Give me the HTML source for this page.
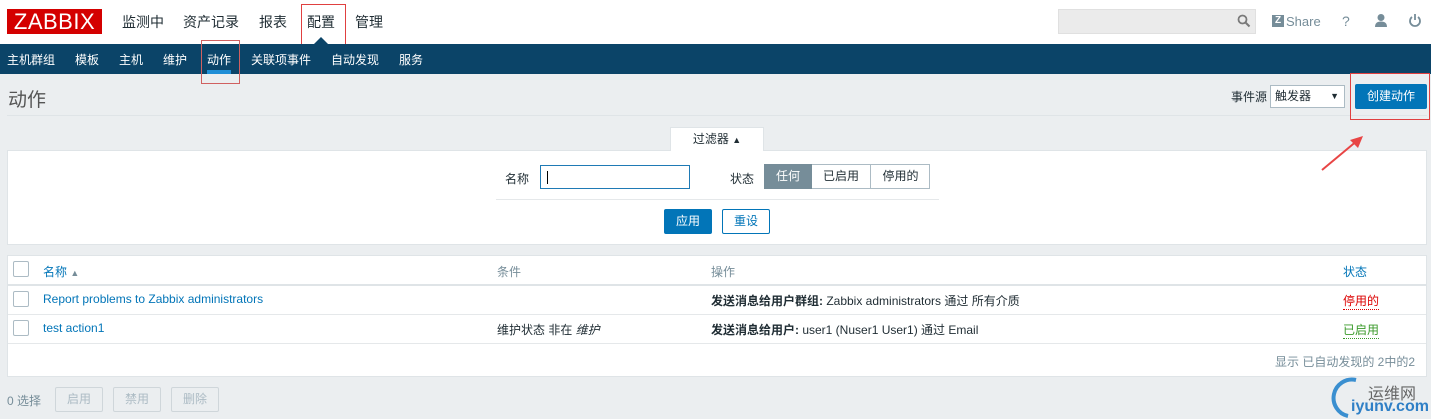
<!DOCTYPE html>
<html><head><meta charset="utf-8"><style>
*{box-sizing:border-box;margin:0;padding:0}
body{width:1431px;height:419px;background:#ebeef0;font-family:"Liberation Sans","Noto Sans CJK SC",sans-serif;font-size:12px;color:#1f2c33;position:relative;overflow:hidden}
.a{position:absolute;white-space:nowrap}
.top{position:absolute;left:0;top:0;width:1431px;height:44px;background:#fff}
.nav{position:absolute;left:0;top:44px;width:1431px;height:30px;background:#0b4468}
.nav span{position:absolute;top:7px;color:#fff;font-size:12px}
.btn{position:absolute;height:25px;line-height:23px;text-align:center;border:1px solid #0275b8;border-radius:2px;font-size:12px}
.cb{position:absolute;left:13px;width:16px;height:16px;border:1px solid #acbbc4;border-radius:2px;background:#fff}
</style></head><body>
<div class="top"></div>
<div class="a" style="left:7px;top:9px;width:95px;height:25px;background:#d40000;color:#fff;font-size:22px;line-height:25px;text-align:center;letter-spacing:0.5px">ZABBIX</div>
<div class="a" style="left:122px;top:12px;font-size:14px;color:#1f2c33">监测中</div>
<div class="a" style="left:183px;top:12px;font-size:14px">资产记录</div>
<div class="a" style="left:259px;top:12px;font-size:14px">报表</div>
<div class="a" style="left:307px;top:12px;font-size:14px">配置</div>
<div class="a" style="left:355px;top:12px;font-size:14px">管理</div>
<div class="a" style="left:301px;top:4px;width:45px;height:42px;border:1px solid #e04040"></div>
<div class="a" style="left:314px;top:37px;width:0;height:0;border-left:7px solid transparent;border-right:7px solid transparent;border-bottom:7px solid #0b4468"></div>
<div class="a" style="left:1058px;top:9px;width:198px;height:25px;background:#ebebeb;border:1px solid #e0e0e0"></div>
<svg class="a" style="left:1237px;top:14px" width="14" height="14" viewBox="0 0 14 14"><circle cx="5.5" cy="5.5" r="4" fill="none" stroke="#7a7a7a" stroke-width="1.8"/><line x1="8.5" y1="8.5" x2="12.5" y2="12.5" stroke="#7a7a7a" stroke-width="2"/></svg>
<div class="a" style="left:1272px;top:15px;width:12px;height:12px;background:#768d99;color:#fff;font-size:10px;font-weight:bold;line-height:12px;text-align:center">Z</div>
<div class="a" style="left:1286px;top:14px;font-size:13px;color:#768d99">Share</div>
<div class="a" style="left:1342px;top:13px;font-size:14px;color:#768d99">?</div>
<svg class="a" style="left:1374px;top:13px" width="14" height="15" viewBox="0 0 14 15"><circle cx="7" cy="4.5" r="3.5" fill="#768d99"/><path d="M1 14 Q1 8.5 7 8.5 Q13 8.5 13 14Z" fill="#768d99"/></svg>
<svg class="a" style="left:1408px;top:13px" width="14" height="15" viewBox="0 0 14 15"><path d="M4 4 A5 5 0 1 0 10 4" fill="none" stroke="#768d99" stroke-width="1.8"/><line x1="7" y1="1" x2="7" y2="7" stroke="#768d99" stroke-width="1.8"/></svg>
<div class="nav">
<span style="left:7px">主机群组</span><span style="left:75px">模板</span><span style="left:119px">主机</span><span style="left:163px">维护</span><span style="left:207px">动作</span><span style="left:251px">关联项事件</span><span style="left:331px">自动发现</span><span style="left:399px">服务</span>
<div class="a" style="left:207px;top:26px;width:24px;height:4px;background:#1f8ed6"></div>
</div>
<div class="a" style="left:201px;top:40px;width:39px;height:44px;border:1px solid #d06060"></div>
<div class="a" style="left:8px;top:85px;font-size:19px;color:#555">动作</div>
<div class="a" style="left:7px;top:115px;width:1420px;height:1px;background:#dfe4e7"></div>
<div class="a" style="left:1231px;top:88px;font-size:12px">事件源</div>
<div class="a" style="left:1270px;top:85px;width:75px;height:23px;background:#fff;border:1px solid #acbbc4;padding-left:4px;line-height:21px">触发器<span style="position:absolute;right:5px;font-size:9px">▼</span></div>
<div class="btn" style="left:1355px;top:84px;width:72px;background:#0275b8;color:#fff">创建动作</div>
<div class="a" style="left:1350px;top:73px;width:80px;height:47px;border:1px solid #e04040"></div>
<div class="a" style="left:670px;top:127px;width:94px;height:24px;background:#fff;border:1px solid #dfe4e7;border-bottom:none;text-align:center;line-height:22px">过滤器 <span style="font-size:9px">▲</span></div>
<div class="a" style="left:7px;top:150px;width:1420px;height:95px;background:#fff;border:1px solid #dfe4e7"></div>
<div class="a" style="left:671px;top:149px;width:92px;height:3px;background:#fff"></div>
<svg class="a" style="left:1318px;top:132px" width="50" height="42"><line x1="4" y1="38" x2="40" y2="8" stroke="#e84545" stroke-width="2"/><path d="M45 4 L32 8 L40 16Z" fill="#e84545"/></svg>
<div class="a" style="left:505px;top:170px">名称</div>
<div class="a" style="left:540px;top:165px;width:150px;height:24px;border:1px solid #1f7ab5;background:#fff"><div style="position:absolute;left:6px;top:5px;width:1px;height:13px;background:#000"></div></div>
<div class="a" style="left:730px;top:170px">状态</div>
<div class="a" style="left:764px;top:164px;width:166px;height:25px;border:1px solid #acbbc4;background:#fff"></div>
<div class="a" style="left:764px;top:164px;width:48px;height:25px;background:#768d99;color:#fff;text-align:center;line-height:25px">任何</div>
<div class="a" style="left:812px;top:165px;width:59px;height:23px;border-right:1px solid #acbbc4;text-align:center;line-height:23px">已启用</div>
<div class="a" style="left:871px;top:165px;width:59px;text-align:center;line-height:23px">停用的</div>
<div class="a" style="left:496px;top:199px;width:443px;height:1px;background:#e5e8ea"></div>
<div class="btn" style="left:664px;top:209px;width:48px;background:#0275b8;color:#fff">应用</div>
<div class="btn" style="left:722px;top:209px;width:48px;background:#fff;color:#0275b8">重设</div>
<div class="a" style="left:7px;top:255px;width:1420px;height:122px;background:#fff;border:1px solid #dfe4e7"></div>
<div class="a" style="left:8px;top:284px;width:1418px;height:2px;background:#dfe4e7"></div>
<div class="a" style="left:8px;top:314px;width:1418px;height:1px;background:#e5e8ea"></div>
<div class="a" style="left:8px;top:343px;width:1418px;height:1px;background:#e5e8ea"></div>
<div class="cb" style="top:261px"></div><div class="cb" style="top:291px"></div><div class="cb" style="top:320px"></div>
<div class="a" style="left:43px;top:263px;color:#0275b8">名称 <span style="font-size:9px;color:#768d99">▲</span></div>
<div class="a" style="left:497px;top:263px;color:#768d99">条件</div>
<div class="a" style="left:711px;top:263px;color:#768d99">操作</div>
<div class="a" style="left:1343px;top:263px;color:#0275b8">状态</div>
<div class="a" style="left:43px;top:292px;color:#0275b8">Report problems to Zabbix administrators</div>
<div class="a" style="left:711px;top:292px"><b>发送消息给用户群组:</b> Zabbix administrators 通过 所有介质</div>
<div class="a" style="left:1343px;top:292px;color:#dc0000;border-bottom:1px dotted #dc0000">停用的</div>
<div class="a" style="left:43px;top:321px;color:#0275b8">test action1</div>
<div class="a" style="left:497px;top:321px">维护状态 非在 <i>维护</i></div>
<div class="a" style="left:711px;top:321px"><b>发送消息给用户:</b> user1 (Nuser1 User1) 通过 Email</div>
<div class="a" style="left:1343px;top:321px;color:#3a9a2a;border-bottom:1px dotted #3a9a2a">已启用</div>
<div class="a" style="left:1275px;top:353px;color:#768d99">显示 已自动发现的 2中的2</div>
<div class="a" style="left:7px;top:392px;color:#768d99">0 选择</div>
<div class="btn" style="left:55px;top:387px;width:48px;border-color:#cfd6da;color:#acbbc4;background:#ebeef0">启用</div>
<div class="btn" style="left:113px;top:387px;width:48px;border-color:#cfd6da;color:#acbbc4;background:#ebeef0">禁用</div>
<div class="btn" style="left:171px;top:387px;width:48px;border-color:#cfd6da;color:#acbbc4;background:#ebeef0">删除</div>
<svg class="a" style="left:1326px;top:374px" width="40" height="45"><path d="M30 6 A18 18 0 1 0 22 42" fill="none" stroke="#3a8fd0" stroke-width="4"/></svg>
<div class="a" style="left:1368px;top:380px;font-size:16px;color:#666">运维网</div>
<div class="a" style="left:1351px;top:398px;font-size:16px;font-weight:bold;color:#2f7fc6">iyunv.com</div>
</body></html>
